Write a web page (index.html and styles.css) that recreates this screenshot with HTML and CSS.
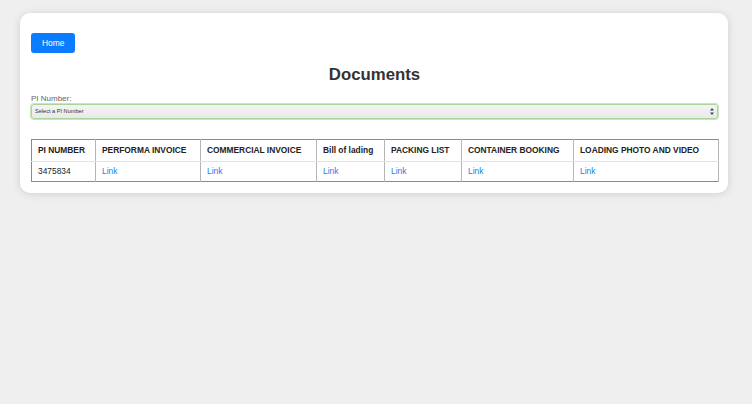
FILE: index.html
```html
<!DOCTYPE html>
<html>
<head>
<meta charset="utf-8">
<link rel="stylesheet" href="styles.css">
</head>
<body>
<div class="card">
  <div class="toolbar"><a class="btn" href="#">Home</a></div>
  <h1 class="title">Documents</h1>
  <label class="label">PI Number:</label>
  <div class="select">
    <span class="select-text">Select a PI Number</span>
    <svg class="select-arrow" width="4" height="7" viewBox="0 0 4 7"><path d="M2 0 L4 2.6 H0 Z M2 7 L4 4.4 H0 Z" fill="#444"/></svg>
  </div>
  <table class="docs">
    <colgroup>
      <col style="width:64px"><col style="width:105px"><col style="width:116px"><col style="width:68px"><col style="width:77px"><col style="width:112px"><col style="width:145px">
    </colgroup>
    <thead>
      <tr>
        <th>PI NUMBER</th>
        <th>PERFORMA INVOICE</th>
        <th>COMMERCIAL INVOICE</th>
        <th>Bill of lading</th>
        <th>PACKING LIST</th>
        <th>CONTAINER BOOKING</th>
        <th>LOADING PHOTO AND VIDEO</th>
      </tr>
    </thead>
    <tbody>
      <tr>
        <td>3475834</td>
        <td><a href="#">Link</a></td>
        <td><a href="#">Link</a></td>
        <td><a href="#">Link</a></td>
        <td><a href="#">Link</a></td>
        <td><a href="#">Link</a></td>
        <td><a href="#">Link</a></td>
      </tr>
    </tbody>
  </table>
</div>
</body>
</html>
```

FILE: styles.css
```css
html, body {
  margin: 0;
  padding: 0;
}
body {
  background: #efefef;
  font-family: "Liberation Sans", Arial, sans-serif;
  width: 752px;
  height: 404px;
  overflow: hidden;
  padding-top: 13px;
  box-sizing: border-box;
}
.card {
  margin-left: 20px;
  width: 708px;
  box-sizing: border-box;
  background: #fff;
  border-radius: 10px;
  box-shadow: 0 1px 8px rgba(0, 0, 0, 0.13);
  padding: 20px 10px 11px 11px;
}
.toolbar {
  display: flex;
}
.btn {
  display: block;
  background: #0b7cff;
  color: #fff;
  font-size: 8.4px;
  line-height: 20px;
  height: 20px;
  padding: 0 11px;
  border-radius: 3px;
  text-decoration: none;
}
.title {
  margin: 12px 0 0;
  font-size: 16.8px;
  line-height: 20px;
  font-weight: bold;
  color: #333;
  text-align: center;
}
.label {
  display: block;
  margin-top: 8.5px;
  font-size: 8px;
  line-height: 10px;
  color: #666;
}
.select {
  margin-top: 0;
  height: 15px;
  box-sizing: border-box;
  border: 1px solid #a9d49a;
  box-shadow: 0 0 0 1px #c8e6bd;
  border-radius: 3px;
  background: linear-gradient(#f4f4f4, #e9e9e9);
  display: flex;
  align-items: center;
  justify-content: space-between;
  padding: 0 3px 0 3px;
}
.select-text {
  font-size: 5.6px;
  color: #333;
}
.select-arrow {
  display: block;
}
.docs {
  margin-top: 20px;
  width: 687px;
  table-layout: fixed;
  border-collapse: collapse;
  border: 1px solid #8a8a8a;
  font-size: 8.4px;
}
.docs th, .docs td {
  padding: 0 6px;
  text-align: left;
  border-right: 1px solid #b5b5b5;
  white-space: nowrap;
  overflow: hidden;
}
.docs th {
  height: 21px;
  font-weight: bold;
  color: #222;
  border-bottom: 1px solid #e2e2e2;
}
.docs td {
  height: 19px;
  color: #222;
}
.docs a {
  color: #1a7cf0;
  text-decoration: none;
}
```
